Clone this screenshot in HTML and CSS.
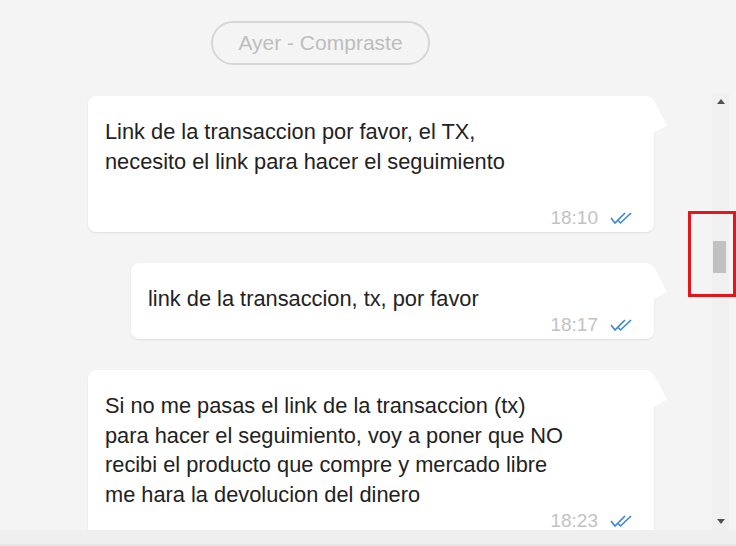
FILE: index.html
```html
<!DOCTYPE html>
<html lang="es">
<head>
  <meta charset="UTF-8" />
  <meta name="viewport" content="width=device-width, initial-scale=1.0"/>
  <title>Chat</title>
  <link rel="stylesheet" href="styles.css">
</head>
<body>

  <div class="screen">
    <div class="chat">
      <div class="messages">
        <div class="day-pill">Ayer - Compraste</div>

        <div class="bubble">
          <p class="text">Link de la transaccion por favor, el TX,<br>necesito el link para hacer el seguimiento<br><br></p>
          <div class="meta">
            <span class="time">18:10</span>
            <svg class="ticks" width="24" height="14" viewBox="0 0 24 14"><polyline points="1,7 5,12 15,2"/><polyline points="8,9.5 10.5,12 21,2"/></svg>
          </div>
        </div>

        <div class="bubble short">
          <p class="text">link de la transaccion, tx, por favor</p>
          <div class="meta">
            <span class="time">18:17</span>
            <svg class="ticks" width="24" height="14" viewBox="0 0 24 14"><polyline points="1,7 5,12 15,2"/><polyline points="8,9.5 10.5,12 21,2"/></svg>
          </div>
        </div>

        <div class="bubble">
          <p class="text">Si no me pasas el link de la transaccion (tx)<br>para hacer el seguimiento, voy a poner que NO<br>recibi el producto que compre y mercado libre<br>me hara la devolucion del dinero</p>
          <div class="meta">
            <span class="time">18:23</span>
            <svg class="ticks" width="24" height="14" viewBox="0 0 24 14"><polyline points="1,7 5,12 15,2"/><polyline points="8,9.5 10.5,12 21,2"/></svg>
          </div>
        </div>
      </div>

      <div class="scrollbar">
        <span class="arrow up"></span>
        <div class="track"><div class="thumb"></div></div>
        <span class="arrow down"></span>
      </div>
    </div>
    <div class="bottom-strip"></div>

    <div class="highlight"></div>
  </div>

</body>
</html>
```

FILE: styles.css
```css
body { margin: 0; background: #f4f4f4; font-family: "Liberation Sans", Arial, sans-serif; color: #222; }
.screen { position: relative; width: 736px; height: 546px; overflow: hidden; }
.chat { display: flex; height: 530px; }
.messages { width: 712px; padding-top: 21px; overflow: hidden; display: flex; flex-direction: column; align-items: flex-end; }

.day-pill { align-self: flex-start; margin-left: 211px; width: 215px; height: 40px; border: 2px solid #d6d6d6; border-radius: 22px; color: #bdbdbd; font-size: 21px; line-height: 40px; text-align: center; }

.bubble { position: relative; width: 566px; box-sizing: border-box; margin: 31px 58px 0 0; padding: 21px 20px 4px 17px; background: #fff; border-radius: 8px; box-shadow: 0 1px 2px rgba(0,0,0,0.09); }
.bubble::after { content: ""; position: absolute; right: -13px; top: 3px; width: 14px; height: 34px; background: #fff; clip-path: polygon(0 0, 100% 78%, 0 100%); }
.bubble.short { width: 523px; }
.text { margin: 0; font-size: 21.8px; line-height: 29.5px; }
.meta { display: flex; justify-content: flex-end; align-items: center; gap: 12px; margin-top: 2px; height: 20px; }
.time { color: #c2c2c2; font-size: 19px; }
.ticks { fill: none; stroke: #3b86d8; stroke-width: 1.6; }

.scrollbar { width: 17px; margin-top: 93px; background: #f0f0f0; display: flex; flex-direction: column; align-items: center; }
.track { flex: 1; width: 100%; position: relative; }
.thumb { position: absolute; left: 1px; right: 3px; top: 131px; height: 32px; background: #c1c1c1; }
.arrow { width: 0; height: 0; border-left: 4px solid transparent; border-right: 4px solid transparent; margin: 6px 0; }
.arrow.up { border-bottom: 5px solid #505050; }
.arrow.down { border-top: 5px solid #505050; }

.bottom-strip { height: 14px; background: #efefef; border-bottom: 2px solid #e6e6e6; }

.highlight { position: absolute; left: 688px; top: 211px; width: 42px; height: 80px; border: 3px solid #e5151c; }
```
